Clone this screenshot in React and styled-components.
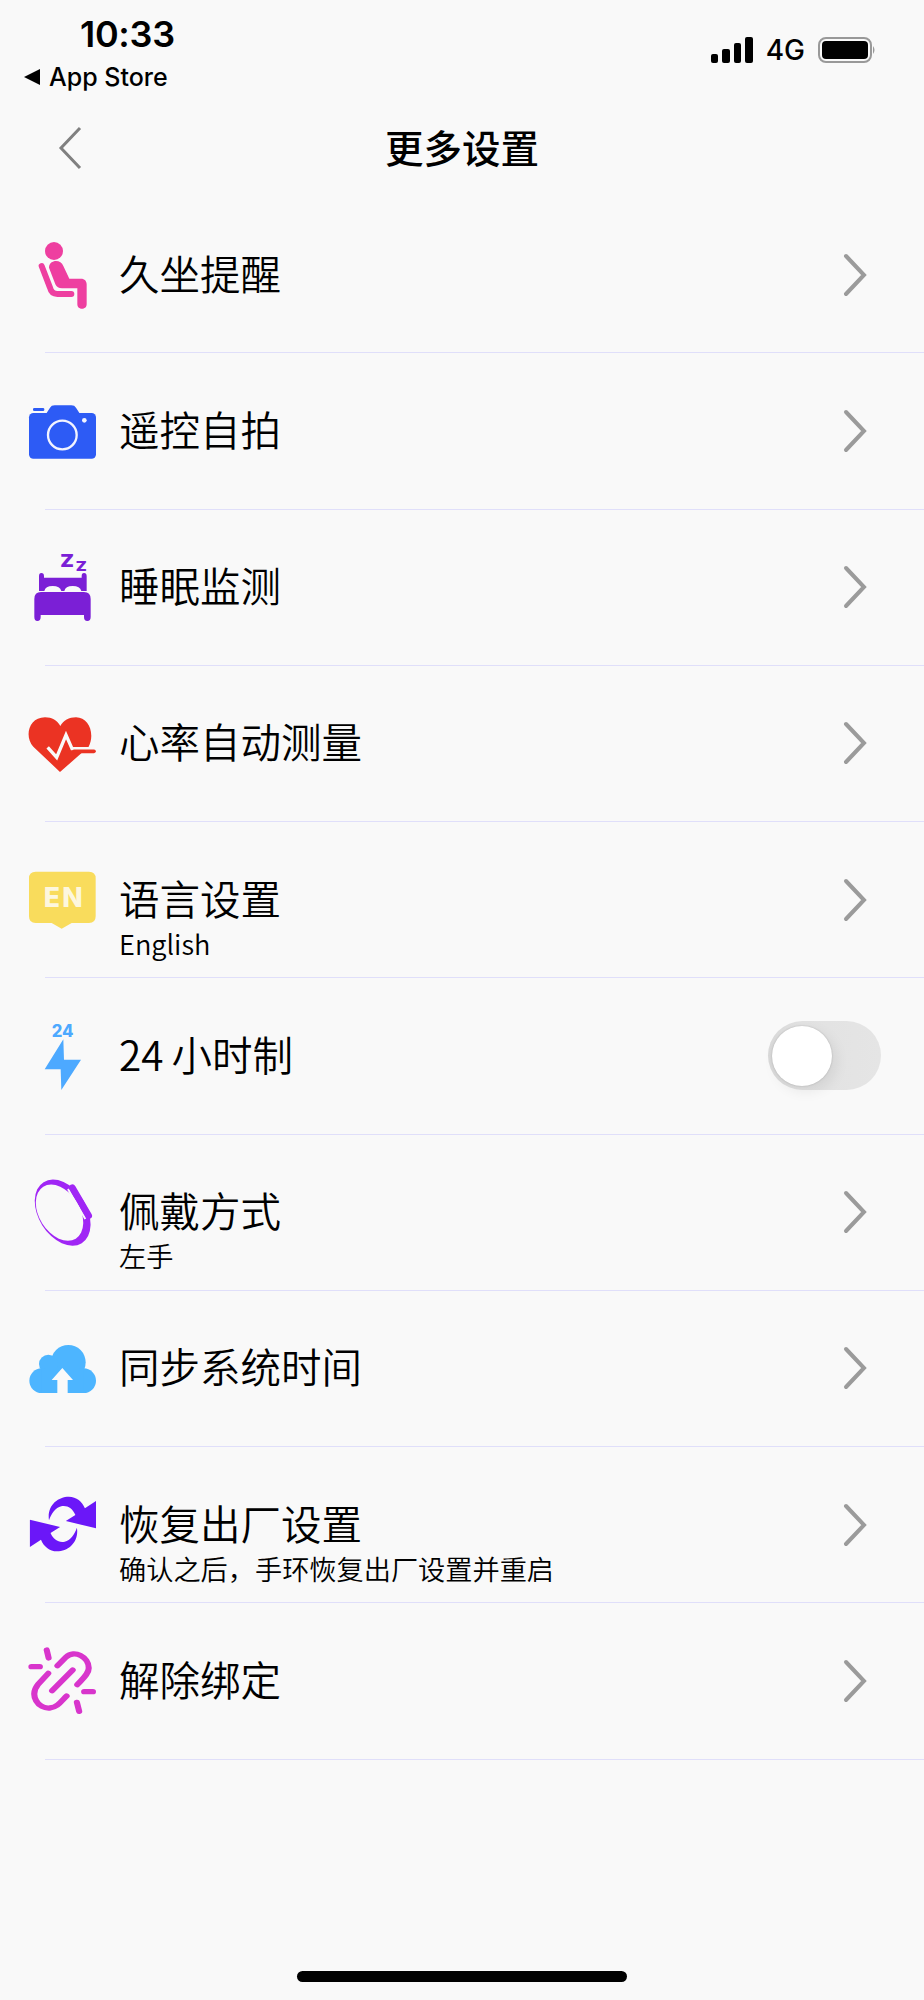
import styled, { createGlobalStyle } from "styled-components";

const GlobalStyle = createGlobalStyle`
  html, body {
    margin: 0;
    padding: 0;
    background: #f9f9f9;
  }
`;

const Page = styled.div`
  min-height: 2000px;
  display: flex;
  flex-direction: column;
  background: #f9f9f9;
  color: #000;
  font-family: "Noto Sans CJK SC", "Noto Sans", sans-serif;
`;

const StatusBar = styled.div`
  height: 98px;
  display: flex;
  justify-content: space-between;
  font-family: Inter, "Liberation Sans", sans-serif;
`;

const StatusLeft = styled.div`
  display: flex;
  flex-direction: column;
  padding: 14px 0 0 24px;
`;

const Time = styled.div`
  font-size: 36px;
  line-height: 40px;
  font-weight: 600;
  margin-left: 56px;
  letter-spacing: -0.3px;
`;

const BackToStore = styled.div`
  display: flex;
  align-items: center;
  gap: 9px;
  font-size: 25px;
  line-height: 30px;
  font-weight: 500;
  margin-top: 8px;
`;

const StoreArrow = styled.span`
  width: 0;
  height: 0;
  border-style: solid;
  border-width: 8px 16px 8px 0;
  border-color: transparent #000 transparent transparent;
`;

const StatusRight = styled.div`
  display: flex;
  align-items: center;
  height: 26px;
  margin: 37px 48px 0 0;
`;

const Signal = styled.div`
  display: flex;
  align-items: flex-end;
  gap: 4px;
  height: 26px;
`;

const SignalBar = styled.span`
  width: 7.5px;
  height: ${(p) => p.$h}px;
  border-radius: 2px;
  background: #000;
`;

const Network = styled.span`
  font-size: 28px;
  font-weight: 500;
  margin: 0 13px;
`;

const Navbar = styled.div`
  height: 99px;
  display: flex;
  align-items: flex-start;
  justify-content: center;
  position: relative;
`;

const BackIcon = styled.svg`
  position: absolute;
  left: 57px;
  top: 28px;
`;

const NavTitle = styled.h1`
  margin: 24px 0 0;
  font-size: 38.5px;
  line-height: 48px;
  font-weight: 500;
`;

const Row = styled.div`
  height: 155.25px;
  display: flex;
  align-items: center;
  padding: 0 56px 0 28px;
`;

const IconBox = styled.svg`
  width: 68px;
  height: 68px;
  flex: none;
`;

const Text = styled.div`
  flex: 1;
  align-self: flex-start;
  margin-left: 23px;
  padding-top: 47.5px;
`;

const Title = styled.div`
  font-size: 40.5px;
  line-height: 56px;
  font-weight: 350;
`;

const Sub = styled.div`
  font-size: 27.2px;
  line-height: 34px;
  font-weight: 350;
`;

const Divider = styled.div`
  height: 1px;
  margin-left: 45px;
  background: #e0dffa;
`;

const Toggle = styled.div`
  width: 113px;
  height: 69px;
  margin-right: -13px;
  border-radius: 35px;
  background: linear-gradient(90deg, #d9d9d9 0%, #e2e2e2 30%, #e5e5e5 100%);
  display: flex;
  align-items: center;
  padding-left: 4px;
  box-sizing: border-box;
`;

const Knob = styled.span`
  width: 60px;
  height: 60px;
  border-radius: 50%;
  background: #fff;
  box-shadow: 4px 5px 14px rgba(0, 0, 0, 0.08), 0 0 2px rgba(0, 0, 0, 0.2);
`;

const HomeBar = styled.div`
  width: 330px;
  height: 11px;
  margin: auto auto 18px;
  border-radius: 6px;
  background: #000;
`;

const Chevron = () => (
  <svg width="26" height="44" viewBox="0 0 26 44">
    <path
      d="M4 3 L22 22 L4 41"
      fill="none"
      stroke="#9b9b9b"
      strokeWidth="4"
      strokeLinecap="round"
    />
  </svg>
);

const RESET_ARROW =
  "M128 268 C122 225 150 197 180 197 C200 197 215 212 222 232 L251 210 L251 292 L172 270 L197 252 C190 232 175 222 160 226 C145 230 134 248 128 268 Z";

const icons = {
  seat: (
    <IconBox viewBox="84 90 204 204">
      <circle cx="162" cy="120" r="27" fill="#ee3fa0" />
      <path
        d="M147 170 C147 156 158 150 168 150 C178 150 186 155 190 165 L208 203 L243 203 C254 203 260 210 260 220 L260 280 C260 298 232 298 232 280 L232 232 L186 232 C176 232 170 228 166 220 Z"
        fill="#ee3fa0"
      />
      <path
        d="M125 165 L150 230 C153 243 160 249 172 249 L214 249"
        fill="none"
        stroke="#ee3fa0"
        strokeWidth="18"
        strokeLinecap="round"
      />
    </IconBox>
  ),
  camera: (
    <IconBox viewBox="84 558 204 204">
      <rect x="87" y="606" width="201" height="137" rx="13" fill="#2d5bf5" />
      <path d="M136 612 L150 590 Q154 583 164 583 L214 583 Q224 583 228 590 L242 612 Z" fill="#2d5bf5" />
      <rect x="99" y="591" width="34" height="9" rx="4" fill="#2d5bf5" />
      <circle cx="187" cy="672" r="43" fill="none" stroke="#f2f4ff" strokeWidth="7" />
      <circle cx="253" cy="628" r="7" fill="#f2f4ff" />
    </IconBox>
  ),
  bed: (
    <IconBox viewBox="84 98 204 204">
      <text
        x="181"
        y="140"
        textLength="41"
        lengthAdjust="spacingAndGlyphs"
        fontFamily="Inter, sans-serif"
        fontWeight="900"
        fontSize="52"
        fill="#7b1fd6"
      >
        Z
      </text>
      <text
        x="227"
        y="151"
        textLength="33"
        lengthAdjust="spacingAndGlyphs"
        fontFamily="Inter, sans-serif"
        fontWeight="900"
        fontSize="39"
        fill="#7b1fd6"
      >
        Z
      </text>
      <path
        d="M117 168 Q117 158 124 158 Q132 158 132 168 L132 172 L245 172 L245 168 Q245 158 252 158 Q260 158 260 168 L260 212 L117 212 Z"
        fill="#7b1fd6"
      />
      <path d="M133 212 Q136 197 158 197 Q180 197 184 212 Z" fill="#f9f9f9" />
      <path d="M193 212 Q196 197 218 197 Q240 197 244 212 Z" fill="#f9f9f9" />
      <path
        d="M123 215 L252 215 Q272 215 272 236 L272 290 Q272 302 262 302 Q252 302 252 290 L252 284 L122 284 L122 290 Q122 302 112 302 Q103 302 103 290 L103 236 Q103 215 123 215 Z"
        fill="#7b1fd6"
      />
    </IconBox>
  ),
  heart: (
    <IconBox viewBox="84 567 204 204">
      <path
        d="M180 756 L100 680 C72 650 86 592 135 592 C156 592 172 602 181 618 C190 602 207 592 228 592 C266 592 286 640 266 680 L244 700 Z"
        fill="#eb3323"
      />
      <polyline
        points="143,682 170,712 198,645 216,686 290,686"
        fill="none"
        stroke="#f9f9f9"
        strokeWidth="10"
      />
      <path d="M222 694 L282 694" stroke="#eb3323" strokeWidth="11" strokeLinecap="round" />
    </IconBox>
  ),
  language: (
    <IconBox viewBox="84 105 204 204">
      <path
        d="M107 122 L267 122 Q287 122 287 142 L287 256 Q287 276 267 276 L215 276 L185 293 L155 276 L107 276 Q87 276 87 256 L87 142 Q87 122 107 122 Z"
        fill="#f9dc5c"
      />
      <text
        x="131"
        y="228"
        textLength="117"
        lengthAdjust="spacing"
        fontFamily="Inter, sans-serif"
        fontWeight="800"
        fontSize="80"
        fill="#fdf7de"
      >
        EN
      </text>
    </IconBox>
  ),
  bolt: (
    <IconBox viewBox="84 573 204 204">
      <text
        x="188"
        y="618"
        textAnchor="middle"
        fontFamily="Inter, sans-serif"
        fontWeight="800"
        fontSize="50"
        fill="#4da9ff"
      >
        24
      </text>
      <polygon points="190,625 134,715 182,715 184,777 243,686 192,686" fill="#4da9ff" />
    </IconBox>
  ),
  band: (
    <IconBox viewBox="84 141 204 204">
      <g transform="rotate(-32 188 245)">
        <path
          fillRule="evenodd"
          d="M188 137 A72 108 0 1 0 188 353 A72 108 0 1 0 188 137 Z M180 148 A61 92 0 1 1 180 332 A61 92 0 1 1 180 148 Z"
          fill="#a026f5"
        />
      </g>
      <path d="M204 174 L256 264" stroke="#f9f9f9" strokeWidth="6" />
      <path d="M217 170 L266 254" stroke="#a026f5" strokeWidth="20" strokeLinecap="round" />
    </IconBox>
  ),
  cloud: (
    <IconBox viewBox="84 610 204 204">
      <circle cx="205" cy="695" r="52" fill="#4db5ff" />
      <circle cx="145" cy="700" r="28" fill="#4db5ff" />
      <circle cx="125" cy="750" r="37" fill="#4db5ff" />
      <circle cx="251" cy="750" r="37" fill="#4db5ff" />
      <rect x="125" y="715" width="126" height="72" fill="#4db5ff" />
      <polygon points="187,712 155,748 172,748 172,787 203,787 203,748 219,748" fill="#f9f9f9" />
    </IconBox>
  ),
  reset: (
    <IconBox viewBox="73 180 178 204" preserveAspectRatio="none">
      <path d={RESET_ARROW} fill="#6b17f8" />
      <path transform="rotate(180 164.5 279)" d={RESET_ARROW} fill="#6b17f8" />
    </IconBox>
  ),
  unlink: (
    <IconBox viewBox="73 649 178 204" preserveAspectRatio="none">
      <g fill="none" stroke="#d835cc" strokeWidth="16" strokeLinecap="round">
        <path d="M150 705 L172 680 C195 655 232 680 232 712 C232 730 215 745 202 762" />
        <path d="M126 728 L100 760 C75 795 100 835 130 832 C150 830 160 812 174 796" />
        <path d="M136 780 L190 718" />
        <path d="M82 708 L104 708" />
        <path d="M122 658 L127 682" />
        <path d="M220 783 L243 783" />
        <path d="M201 815 L207 842" />
      </g>
    </IconBox>
  ),
};

const items = [
  { icon: "seat", title: "久坐提醒" },
  { icon: "camera", title: "遥控自拍" },
  { icon: "bed", title: "睡眠监测" },
  { icon: "heart", title: "心率自动测量" },
  { icon: "language", title: "语言设置", sub: "English" },
  { icon: "bolt", title: "24\u2009小时制", toggle: true },
  { icon: "band", title: "佩戴方式", sub: "左手" },
  { icon: "cloud", title: "同步系统时间" },
  { icon: "reset", title: "恢复出厂设置", sub: "确认之后，手环恢复出厂设置并重启" },
  { icon: "unlink", title: "解除绑定" },
];

const App = () => {
  return (
    <Page>
      <GlobalStyle />
      <StatusBar>
        <StatusLeft>
          <Time>10:33</Time>
          <BackToStore>
            <StoreArrow />
            App Store
          </BackToStore>
        </StatusLeft>
        <StatusRight>
          <Signal>
            <SignalBar $h={9} />
            <SignalBar $h={14} />
            <SignalBar $h={20} />
            <SignalBar $h={26} />
          </Signal>
          <Network>4G</Network>
          <svg width="58" height="26" viewBox="0 0 58 26">
            <rect x="1" y="1" width="52" height="24" rx="7" fill="none" stroke="#999" strokeWidth="2" />
            <rect x="4" y="4" width="46" height="18" rx="4" fill="#000" />
            <path d="M55 9 Q58 13 55 17 Z" fill="#999" />
          </svg>
        </StatusRight>
      </StatusBar>
      <Navbar>
        <BackIcon width="26" height="44" viewBox="0 0 26 44">
          <path d="M23 2 L4 22 L23 42" fill="none" stroke="#808080" strokeWidth="3" />
        </BackIcon>
        <NavTitle>更多设置</NavTitle>
      </Navbar>
      {items.map((item) => (
        <div key={item.title}>
          <Row>
            {icons[item.icon]}
            <Text>
              <Title>{item.title}</Title>
              {item.sub && <Sub>{item.sub}</Sub>}
            </Text>
            {item.toggle ? (
              <Toggle>
                <Knob />
              </Toggle>
            ) : (
              <Chevron />
            )}
          </Row>
          <Divider />
        </div>
      ))}
      <HomeBar />
    </Page>
  );
};

export default App;
